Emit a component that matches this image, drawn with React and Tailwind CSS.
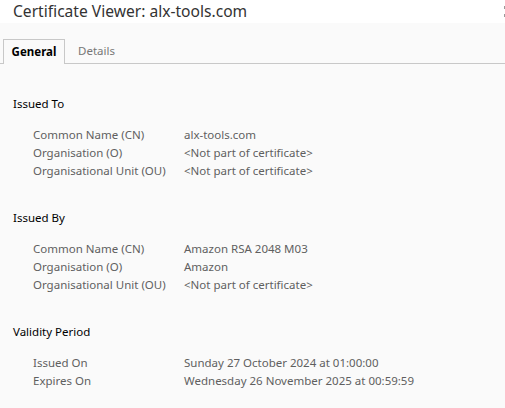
import React from 'react';

const sections = [
  {
    title: 'Issued To',
    rows: [
      ['Common Name (CN)', 'alx-tools.com'],
      ['Organisation (O)', '<Not part of certificate>'],
      ['Organisational Unit (OU)', '<Not part of certificate>'],
    ],
  },
  {
    title: 'Issued By',
    rows: [
      ['Common Name (CN)', 'Amazon RSA 2048 M03'],
      ['Organisation (O)', 'Amazon'],
      ['Organisational Unit (OU)', '<Not part of certificate>'],
    ],
  },
  {
    title: 'Validity Period',
    rows: [
      ['Issued On', 'Sunday 27 October 2024 at 01:00:00'],
      ['Expires On', 'Wednesday 26 November 2025 at 00:59:59'],
    ],
  },
];

const App = () => {
  return (
    <div className="w-[505px] h-[408px] overflow-hidden bg-[#fafafa] font-['Noto_Sans','Open_Sans',sans-serif] text-[11.5px]">
      {/* Title bar */}
      <div className="relative h-[23px] bg-white flex items-center pl-[13px]">
        <h1 className="text-[15.6px] leading-none text-[#333]">Certificate Viewer: alx-tools.com</h1>
        <div className="absolute right-0 top-[6px] flex flex-col gap-[5px]">
          <span className="block w-[1px] h-[3px] bg-[#999]" />
          <span className="block w-[1px] h-[3px] bg-[#999]" />
        </div>
      </div>

      {/* Tabs */}
      <div className="flex items-end pt-[15px] border-b border-[#c8c8c8]">
        <div className="w-[3px]" />
        <div className="h-[25px] w-[62px] -mb-px border border-b-0 border-[#c8c8c8] bg-[#fafafa] flex items-center justify-center font-bold text-black">
          General
        </div>
        <div className="h-[25px] px-[13px] flex items-center text-[#777]">Details</div>
      </div>

      {/* Content */}
      <div className="pl-[13px] pt-[32px]">
        {sections.map((s) => (
          <div key={s.title} className="mb-[30px]">
            <div className="h-[16px] leading-[16px] text-black">{s.title}</div>
            <div className="mt-[14px] pl-[20px]">
              {s.rows.map(([k, v]) => (
                <div key={k} className="flex h-[18px] items-center text-[#5f5f5f]">
                  <span className="w-[151px] shrink-0">{k}</span>
                  <span>{v}</span>
                </div>
              ))}
            </div>
          </div>
        ))}
      </div>
    </div>
  );
};

export default App;
